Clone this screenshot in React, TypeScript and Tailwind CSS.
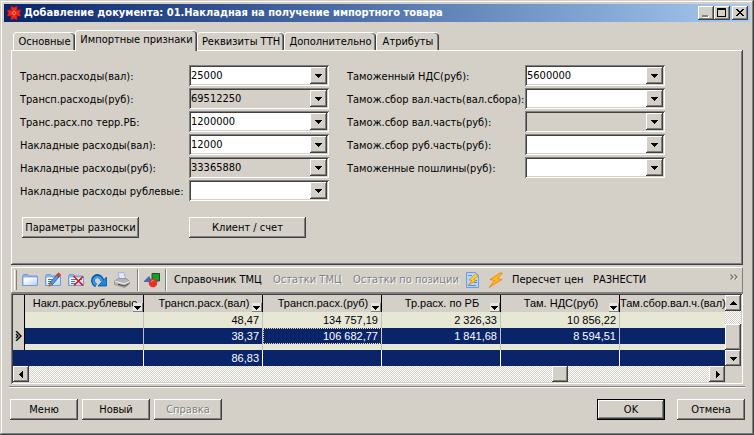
import type { ReactNode } from "react";

const raised =
  "bg-[#d4d0c8] shadow-[inset_-1px_-1px_0_#404040,inset_1px_1px_0_#ffffff,inset_-2px_-2px_0_#808080]";
const sunken =
  "shadow-[inset_1px_1px_0_#808080,inset_-1px_-1px_0_#ffffff,inset_2px_2px_0_#404040,inset_-2px_-2px_0_#d4d0c8]";
const dither =
  "bg-[conic-gradient(#ffffff_25%,#d4d0c8_0_50%,#ffffff_0_75%,#d4d0c8_0)] bg-[length:2px_2px]";
const disabledText = "text-[#808080] [text-shadow:1px_1px_0_#ffffff]";

type Direction = "down" | "up" | "left" | "right";

const arrowPaths: Record<Direction, string> = {
  down: "M0 2h7v1h-1v1h-1v1h-1v1h-1v-1h-1v-1h-1v-1h-1z",
  up: "M3 1h1v1h1v1h1v1h1v1h-7v-1h1v-1h1v-1h1z",
  left: "M5 0v7h-1v-1h-1v-1h-1v-1h-1v-1h1v-1h1v-1h1v-1z",
  right: "M2 0v7h1v-1h1v-1h1v-1h1v-1h-1v-1h-1v-1h-1v-1z",
};

function Arrow({ dir }: { dir: Direction }) {
  return (
    <svg width="7" height="7" viewBox="0 0 7 7" shapeRendering="crispEdges" aria-hidden="true">
      <path d={arrowPaths[dir]} fill="#000" />
    </svg>
  );
}

type Field = { id: string; label: string; value: string; locked?: boolean };

const leftFields: Field[] = [
  { id: "transp-val", label: "Трансп.расходы(вал):", value: "25000" },
  { id: "transp-rub", label: "Трансп.расходы(руб):", value: "69512250", locked: true },
  { id: "transp-rb", label: "Транс.расх.по терр.РБ:", value: "1200000" },
  { id: "nakl-val", label: "Накладные расходы(вал):", value: "12000" },
  { id: "nakl-rub", label: "Накладные расходы(руб):", value: "33365880", locked: true },
  { id: "nakl-rubl", label: "Накладные расходы рублевые:", value: "" },
];

const rightFields: Field[] = [
  { id: "nds", label: "Таможенный НДС(руб):", value: "5600000" },
  { id: "sbor-val-sbora", label: "Тамож.сбор вал.часть(вал.сбора):", value: "" },
  { id: "sbor-val-rub", label: "Тамож.сбор вал.часть(руб):", value: "", locked: true },
  { id: "sbor-rub", label: "Тамож.сбор руб.часть(руб):", value: "" },
  { id: "poshliny", label: "Таможенные пошлины(руб):", value: "" },
];

function ComboRow({ field, labelWidth }: { field: Field; labelWidth: string }) {
  return (
    <div className="flex h-[21px] items-center">
      <label htmlFor={field.id} className={`shrink-0 whitespace-nowrap pt-0.5 ${labelWidth}`}>
        {field.label}
      </label>
      <div className={`flex h-[21px] w-[140px] p-0.5 ${sunken} ${field.locked ? "bg-[#d4d0c8]" : "bg-white"}`}>
        <input
          id={field.id}
          defaultValue={field.value}
          readOnly={field.locked}
          className="min-w-0 flex-1 bg-transparent outline-none"
        />
        <button type="button" aria-label="Открыть список" className={`flex w-[17px] items-center justify-center ${raised}`}>
          <Arrow dir="down" />
        </button>
      </div>
    </div>
  );
}

function PushButton({ children, width, primary, disabled }: { children: ReactNode; width: string; primary?: boolean; disabled?: boolean }) {
  return (
    <button
      type="button"
      disabled={disabled}
      className={`h-[21px] ${width} ${raised} ${primary ? "border border-black" : ""} ${disabled ? disabledText : ""}`}
    >
      {children}
    </button>
  );
}

const tabs = [
  { name: "Основные", width: "w-[62px]" },
  { name: "Импортные признаки", width: "w-[122px]", active: true },
  { name: "Реквизиты ТТН", width: "w-[87px]" },
  { name: "Дополнительно", width: "w-[92px]" },
  { name: "Атрибуты", width: "w-[63px]" },
];

function FolderShape() {
  return (
    <>
      <path d="M.5 4.500 1.500 2.500h4l1 1.500h8.500l.5 1v8.500H.5z" fill="#8fb0ec" />
      <path d="M1.500 5.500h13.500V13H1.500z" fill="url(#folderFill)" />
      <path d="M.5 4.500 1.500 2.500h4l1 1.500h8.500l.5 1v8.500H.5z" fill="none" stroke="#6d93dd" strokeWidth=".9" />
    </>
  );
}

const icons = {
  folder: <FolderShape />,
  edit: (
    <>
      <FolderShape />
      <path d="M3 7.500h4M3 9.500h3M3 11.500h2" stroke="#3f78c8" />
      <path d="m5 10.500 6.500-7.500 2.500 2-6.500 7.500z" fill="#4d9bea" stroke="#23539c" strokeWidth=".8" />
      <path d="M11.500 3 13.500.8l2.300 2L14 5z" fill="#d8452c" stroke="#8c2410" strokeWidth=".5" />
      <path d="m5 10.500-1.200 3.800 3.700-1.800z" fill="#d98a3c" stroke="#6b3c10" strokeWidth=".5" />
    </>
  ),
  remove: (
    <>
      <FolderShape />
      <path d="M3 7.500h5M3 9.500h4M3 11.500h5M11 7.500h3M12 11.500h2" stroke="#3f78c8" />
      <path d="m5.500 4 9.500 9.500M15 4.500 6 13.500" stroke="#e01808" strokeWidth="1.600" fill="none" />
    </>
  ),
  refresh: (
    <>
      <path d="M5 13.500C1.500 11.500 1.200 7.500 3.300 5.300 5.800 3 10 3.600 11.300 8.500" fill="none" stroke="#0b4f9e" strokeWidth="3.800" />
      <path d="M15.500 5v9H7z" fill="#1787e0" stroke="#0b4f9e" strokeWidth=".8" />
      <path d="M4.700 13C2 11 1.900 7.800 3.700 6 6 4 9.800 4.500 11.300 9.500" fill="none" stroke="#2b9cf0" strokeWidth="2.200" />
    </>
  ),
  printer: (
    <>
      <path d="m4 .8 6-.3 1.500 6.500H5.500z" fill="#dfe9ff" stroke="#93a8e0" strokeWidth=".8" />
      <path d="m.5 9 4-2.500h7.500L15.500 9v3l-5 3.500-10-3z" fill="#b4b4b4" stroke="#8a8a8a" strokeWidth=".7" />
      <path d="m1 9.300 9.500 2.500 5-2.500" fill="none" stroke="#f2f2f2" />
      <path d="m4 12.300 6.500 1.700 4-2.300" fill="none" stroke="#444" />
    </>
  ),
  shapes: (
    <>
      <path d="M8 1.500h7.500V9H8z" fill="#1f9a2c" stroke="#0a5c14" />
      <path d="M0 9.500 5 4.500l2.500 5z" fill="#2f70d0" stroke="#1e4c9c" strokeWidth=".6" />
      <circle cx="9" cy="11" r="4.300" fill="#ee2e24" />
      <path d="M7 9.700q1-1.500 2.500-1" stroke="#ff9a90" fill="none" />
    </>
  ),
  sheet: (
    <>
      <path d="M1.500.5h9L13.500 3.500v12h-12z" fill="#b8d4f8" stroke="#6f9ce0" />
      <path d="M3 3.500h4M3 13.500h8M9 10.500h3M9 8.500h3" stroke="#5d8fd8" />
      <path d="M10.500 2 4 8l3 .5L3.500 13 11 8.500 8.500 7.500 13 4z" fill="#ffd820" stroke="#e07810" strokeWidth=".7" />
    </>
  ),
  bolt: <path d="M11 1 1 7.500l4.500 1L0 15.500 13 7.500 8.500 6.500 13.500 1z" fill="#ffb81c" stroke="#f07a10" strokeWidth=".8" />,
};

function ToolIcon({ name, label }: { name: keyof typeof icons; label: string }) {
  return (
    <button type="button" aria-label={label} className="size-4 shrink-0">
      <svg width="16" height="16" viewBox="0 0 16 16" aria-hidden="true">
        <defs>
          <linearGradient id="folderFill" x1="0" y1="0" x2="1" y2="1">
            <stop offset="0.200" stopColor="#ffffff" />
            <stop offset="1" stopColor="#b4d4fa" />
          </linearGradient>
        </defs>
        {icons[name]}
      </svg>
    </button>
  );
}

function ToolSeparator() {
  return <div className="h-[22px] w-0.5 shrink-0 border-l border-r border-l-[#808080] border-r-white" />;
}

const columns = [
  "Накл.расх.рублевые",
  "Трансп.расх.(вал)",
  "Трансп.расх.(руб)",
  "Тр.расх. по РБ",
  "Там. НДС(руб)",
  "Там.сбор.вал.ч.(вал)",
];
const firstRow = ["", "48,47", "134 757,19", "2 326,33", "10 856,22", ""];
const currentRow = ["", "38,37", "106 682,77", "1 841,68", "8 594,51", ""];
const totals = ["", "86,83", "", "", "", ""];

function Grid() {
  const last = columns.length - 1;
  const line = (i: number) => (i < last ? "border-r border-[#c0c0c0]" : "");
  return (
    <table className="w-full table-fixed border-separate border-spacing-0 font-['Liberation_Sans',Arial,sans-serif] text-[11px] leading-4">
      <colgroup>
        <col className="w-3" />
        <col className="w-[119px]" />
        <col className="w-[119px]" />
        <col className="w-[119px]" />
        <col className="w-[119px]" />
        <col className="w-[119px]" />
        <col />
      </colgroup>
      <thead>
        <tr className="h-[17px]">
          <td className="border-r border-black p-0" />
          {columns.map((name, i) => (
            <th key={name} scope="col" className={`p-0 font-normal ${i < last ? "border-r border-black" : ""}`}>
              <div className={`relative h-[17px] whitespace-nowrap text-center ${i < last ? "pl-0.5" : ""}`}>
                {name}
                {i < last && (
                  <button type="button" aria-label={`Фильтр: ${name}`} className="absolute bottom-0 right-0 flex h-[9px] w-2.5 items-center justify-center border-b border-r border-b-[#808080] border-r-[#808080] bg-[#e8e6e0]">
                    <Arrow dir="down" />
                  </button>
                )}
              </div>
            </th>
          ))}
        </tr>
      </thead>
      <tbody>
        <tr className="h-4">
          <td className="border-r border-black p-0" />
          {firstRow.map((v, i) => (
            <td key={i} className={`bg-[#e7e7d6] py-0 pl-0 pr-[3px] text-right ${line(i)}`}>{v}</td>
          ))}
        </tr>
        <tr className="h-4 text-white">
          <td className="border-r border-black p-0">
            <svg width="9" height="10" viewBox="0 0 9 10" className="ml-0.5 block" aria-hidden="true">
              <path d="m1 0 5 5-5 5M1 3l2 2-2 2" fill="none" stroke="#000" strokeWidth="1.400" />
            </svg>
          </td>
          {currentRow.map((v, i) => (
            <td
              key={i}
              className={`bg-[#0a246a] py-0 pl-0 pr-[3px] text-right ${line(i)} ${i === 2 ? "outline-1 -outline-offset-1 outline-dotted outline-[#f5db95]" : ""}`}
            >
              {v}
            </td>
          ))}
        </tr>
        <tr className="h-1.5">
          <td className="border-r border-black p-0" />
          {columns.map((name, i) => (
            <td key={name} className={`bg-[#e7e7d6] p-0 ${line(i)}`} />
          ))}
        </tr>
      </tbody>
      <tfoot>
        <tr className="h-4 text-white">
          <td className="bg-[#0a246a] p-0" />
          {totals.map((v, i) => (
            <td key={i} className={`bg-[#0a246a] py-0 pl-0 pr-[3px] text-right ${i < last ? "border-r border-white" : ""}`}>{v}</td>
          ))}
        </tr>
      </tfoot>
    </table>
  );
}

function ScrollButton({ dir, label }: { dir: Direction; label: string }) {
  return (
    <button type="button" aria-label={label} className={`flex size-4 shrink-0 items-center justify-center ${raised}`}>
      <Arrow dir={dir} />
    </button>
  );
}

export default function App() {
  return (
    <div className="bg-[#d4d0c8] px-1 pb-[15px] pt-1 font-['DejaVu_Sans_Condensed','DejaVu_Sans',sans-serif] text-[11px] leading-[14px] text-black shadow-[inset_-1px_-1px_0_#404040,inset_1px_1px_0_#d4d0c8,inset_-2px_-2px_0_#808080,inset_2px_2px_0_#ffffff]">
      <header className="flex h-[18px] items-center bg-linear-to-r from-[#0a246a] to-[#a6caf0] px-0.5">
        <svg width="16" height="16" viewBox="0 0 16 16" className="shrink-0" aria-hidden="true">
          <path
            d="M5 1l3 1.500L11 1v3.500L10 6l1.500-1H15l-1.500 3L15 11h-3.500L10 10l1 1.500V15l-3-1.500L5 15v-3.500L6 10l-1.500 1H1l1.500-3L1 5h3.500L6 6 5 4.500z"
            fill="#f0281c"
            stroke="#b3120c"
            strokeWidth=".6"
          />
          <path d="m8 5.500 2.500 2.500L8 10.500 5.500 8z" fill="#ff7a5c" />
          <path d="m8 7 1 1-1 1-1-1z" fill="#a01008" />
        </svg>
        <h1 className="min-w-0 flex-1 overflow-hidden whitespace-nowrap pl-0.5 font-bold text-white">
          Добавление документа: 01.Накладная на получение импортного товара
        </h1>
        <div className="flex">
          <button type="button" aria-label="Свернуть" className={`h-[14px] w-4 ${raised}`}>
            <svg width="16" height="14" viewBox="0 0 16 14" shapeRendering="crispEdges" aria-hidden="true">
              <path d="M5 10h6v2H5z" fill="#fff" />
              <path d="M4 9h6v2H4z" fill="#808080" />
            </svg>
          </button>
          <button type="button" aria-label="Развернуть" className={`h-[14px] w-4 ${raised}`}>
            <svg width="16" height="14" viewBox="0 0 16 14" shapeRendering="crispEdges" aria-hidden="true">
              <path d="M3 2h9v9H3zM4 4v6h7V4z" fill="#000" fillRule="evenodd" />
            </svg>
          </button>
          <button type="button" aria-label="Закрыть" className={`ml-0.5 h-[14px] w-4 ${raised}`}>
            <svg width="16" height="14" viewBox="0 0 16 14" shapeRendering="crispEdges" aria-hidden="true">
              <path d="M4 3h2v1h1v1h2V4h1V3h2v1h-1v1h-1v1H9v1h1v1h1v1h1v1h-2V9H9V8H7v1H6v1H4V9h1V8h1V7h1V6H6V5H5V4H4z" fill="#000" />
            </svg>
          </button>
        </div>
      </header>

      <main className="px-[7px] pt-2">
        <div role="tablist" className="flex h-5 items-end pl-0.5">
          {tabs.map((t) => (
            <button
              key={t.name}
              type="button"
              role="tab"
              aria-selected={!!t.active}
              className={`shrink-0 whitespace-nowrap rounded-t-sm border-l border-t border-white bg-[#d4d0c8] shadow-[inset_-1px_0_0_#404040,inset_-2px_0_0_#808080] ${t.width} ${t.active ? "z-10 -mb-px h-[21px] pb-0.5" : "h-[18px]"}`}
            >
              {t.name}
            </button>
          ))}
        </div>
        <section className="h-[215px] px-[9px] pt-[15px] shadow-[inset_-1px_-1px_0_#404040,inset_1px_1px_0_#ffffff,inset_-2px_-2px_0_#808080]">
          <div className="flex gap-[18px]">
            <div className="flex flex-col gap-0.5">
              {leftFields.map((f) => (
                <ComboRow key={f.id} field={f} labelWidth="w-[169px]" />
              ))}
            </div>
            <div className="flex flex-col gap-0.5">
              {rightFields.map((f) => (
                <ComboRow key={f.id} field={f} labelWidth="w-[178px]" />
              ))}
            </div>
          </div>
          <div className="mt-4 flex gap-[50px] pl-0.5">
            <PushButton width="w-[117px]">Параметры разноски</PushButton>
            <PushButton width="w-[117px]">Клиент / счет</PushButton>
          </div>
        </section>

        <div role="toolbar" aria-label="Действия" className="mt-0.5 flex h-[26px] items-center border-b border-l border-r border-t border-b-[#808080] border-l-white border-r-[#808080] border-t-white pl-0.5">
          <div className="h-5 w-[3px] shrink-0 border-l border-r border-l-white border-r-[#808080]" />
          <div className="flex gap-[7px] pl-[5px] pr-[7px]">
            <ToolIcon name="folder" label="Открыть" />
            <ToolIcon name="edit" label="Изменить" />
            <ToolIcon name="remove" label="Удалить" />
            <ToolIcon name="refresh" label="Обновить" />
            <ToolIcon name="printer" label="Печать" />
          </div>
          <ToolSeparator />
          <div className="flex px-[5px]">
            <ToolIcon name="shapes" label="Объекты" />
          </div>
          <ToolSeparator />
          <div className="flex min-w-0 flex-1 items-center whitespace-nowrap pl-[7px]">
            <button type="button" className="w-[99px] shrink-0 text-left">Справочник ТМЦ</button>
            <button type="button" disabled className={`w-20 shrink-0 text-left ${disabledText}`}>Остатки ТМЦ</button>
            <button type="button" disabled className={`w-28 shrink-0 text-left ${disabledText}`}>Остатки по позиции</button>
            <ToolIcon name="sheet" label="Отчет" />
            <div className="flex pl-2 pr-[7px]">
              <ToolIcon name="bolt" label="Выполнить" />
            </div>
            <button type="button" className="w-[81px] shrink-0 text-left">Пересчет цен</button>
            <button type="button" className="shrink-0 text-left">РАЗНЕСТИ</button>
          </div>
          <button type="button" aria-label="Еще" className="self-start px-[3px] pt-1.5">
            <svg width="9" height="6" viewBox="0 0 9 6" aria-hidden="true">
              <path d="m1.500 1 2.500 2.500L1.500 6M5.500 1 8 3.500 5.500 6" fill="none" stroke="#fff" />
              <path d="M.5.5 3 3 .5 5.500M4.500.5 7 3 4.500 5.500" fill="none" stroke="#707070" strokeWidth="1.200" />
            </svg>
          </button>
        </div>

        <section className={`p-0.5 ${sunken}`}>
          <div className="flex">
            <div className="min-w-0 flex-1">
              <Grid />
            </div>
            <div className={`flex w-4 flex-col ${dither}`}>
              <ScrollButton dir="up" label="Вверх" />
              <div className="flex-1" />
              <div className={`h-[26px] ${raised}`} />
              <ScrollButton dir="down" label="Вниз" />
            </div>
          </div>
          <div className="flex h-4">
            <div className={`flex min-w-0 flex-1 ${dither}`}>
              <ScrollButton dir="left" label="Влево" />
              <div className="flex min-w-0 flex-1 justify-end pr-[141px]">
                <div className={`w-4 ${raised}`} />
              </div>
              <ScrollButton dir="right" label="Вправо" />
            </div>
            <div className="w-4" />
          </div>
        </section>
      </main>

      <footer className="mx-[5px] mt-0.5 flex gap-1 border-t border-[#808080] pl-px pt-3 shadow-[inset_0_1px_0_#ffffff]">
        <PushButton width="w-[68px]">Меню</PushButton>
        <PushButton width="w-[68px]">Новый</PushButton>
        <PushButton width="w-[68px]" disabled>Справка</PushButton>
        <div className="ml-auto flex gap-3">
          <PushButton width="w-[68px]" primary>OK</PushButton>
          <PushButton width="w-[68px]">Отмена</PushButton>
        </div>
      </footer>
    </div>
  );
}
